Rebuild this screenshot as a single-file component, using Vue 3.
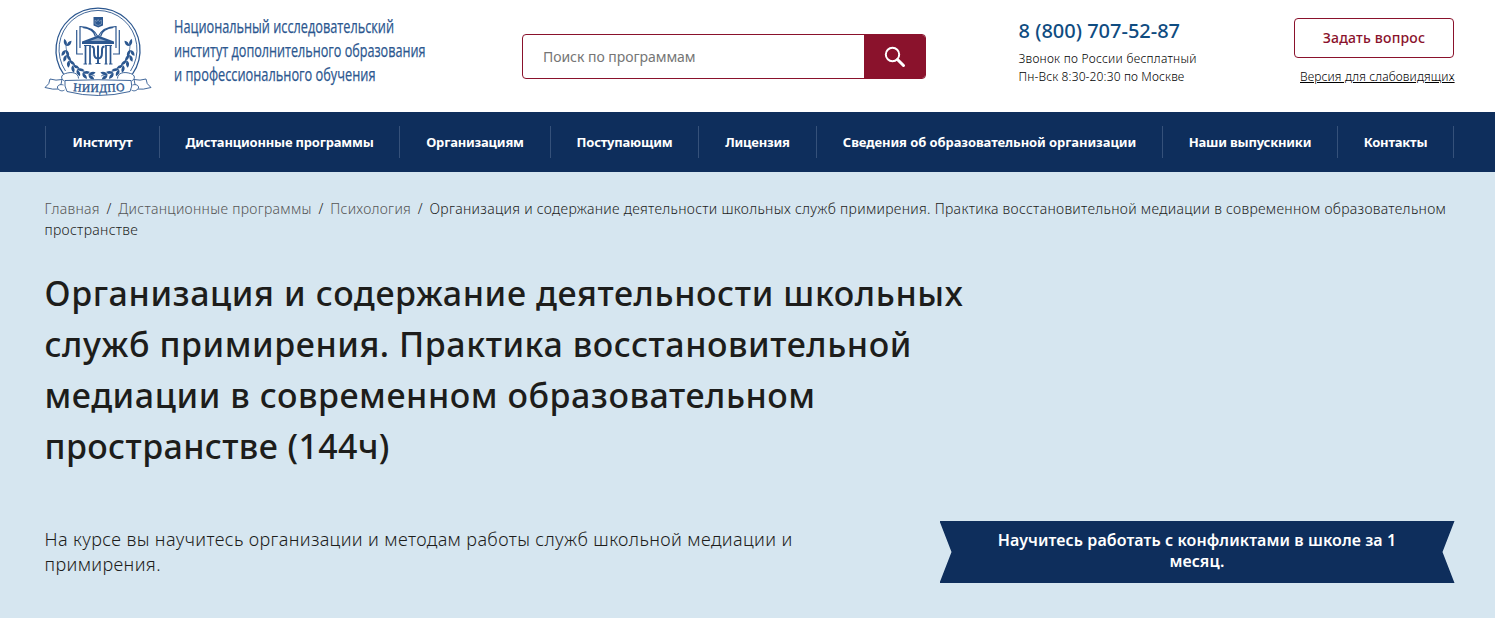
<script setup>
const menu = [
  { label: 'Институт', width: 114 },
  { label: 'Дистанционные программы', width: 240 },
  { label: 'Организациям', width: 151 },
  { label: 'Поступающим', width: 148 },
  { label: 'Лицензия', width: 118 },
  { label: 'Сведения об образовательной организации', width: 346, wide: true },
  { label: 'Наши выпускники', width: 175 },
  { label: 'Контакты', width: 117 },
]
const crumbs = ['Главная', 'Дистанционные программы', 'Психология']
const leaves = [
  [26.500, 46, -75], [26, 50, 100], [26.500, 55, 85], [29, 60.500, 68], [32.500, 65.500, 52], [37, 69.500, 38], [42.500, 73, 25], [48.500, 75, 10],
]
</script>

<template>
  <div class="page">
    <header class="header">
      <svg class="emblem" width="120" height="105" viewBox="0 0 120 105">
        <g fill="none" stroke="#2c578f">
          <path d="M23.500 74A42 42 0 1 1 92.500 74" stroke-width="1.300" />
          <path d="M25.500 71A39 39 0 1 1 90.500 71" stroke-width=".9" />
          <path d="M40 48V26.500c10 0 15 4 18 10.500 3-6.500 8-10.500 18-10.500V48M36.700 30v24H43M79.300 30v24H73M42.500 27.500c8 1 12 5 13 9M73.500 27.500c-8 1-12 5-13 9" stroke-width="1.200" />
          <path d="M51.500 46.500c3 0 2.500 3 2.500 6 0 4 1 6 4 6s4-2 4-6c0-3-.5-6 2.500-6M58 45.500v18" stroke-width="2" />
          <path d="M45.500 45v19M50 45v19M66 45v19M70.500 45v19" stroke-width="1.700" />
          <path d="M44 45.500h7M65 45.500h7M43.500 64h3.500M48.500 64h3M64.500 64h3M69 64h3.500M55.500 63.500h5" stroke-width="1.200" />
        </g>
        <path d="M42 41.500L58 35.500l16 6v2.500H42z" fill="#2c578f" />
        <path d="M50 41l8-3 8 3z" fill="#8ea8c8" />
        <path d="M53.500 17h9.500v8.500l-4.750 2-4.750-2z" fill="#2c578f" />
        <path d="M55 20l2 1.500 1.200-2 1.200 2 2-1.500v4l-3.200 1.500-3.200-1.500z" fill="none" stroke="#a9bdd5" stroke-width=".5" />
        <g v-for="side in [1, -1]" :key="side" :transform="side === 1 ? '' : 'translate(116 0) scale(-1 1)'">
          <path d="M26 42c-1 17 10 29 29 34" fill="none" stroke="#2c578f" stroke-width=".7" />
          <path v-for="leaf in leaves" :key="leaf[1]" :transform="`translate(${leaf[0]} ${leaf[1]}) rotate(${leaf[2]})`" d="M0 0q1-4.500 6.500-4-1.500 4-6.500 4zM0 0q1 4.500 6.500 3.500Q5-.5 0 0z" fill="#2c578f" />
          <g fill="#fff" stroke="#2c578f" stroke-width=".9" stroke-linejoin="round">
            <path d="M22 79.500q-6 1.500-12-.5 0 5-5 8.500 8 2.500 15 1.500z" />
            <path d="M24.500 90c-3 2-6 0-7-2-.5-3 3-4 6-3" />
            <path d="M24.500 81c-4-2-4-6 1-7.500 6-2 13-1 13 5" />
          </g>
        </g>
        <path d="M25 80.500Q58 79 91 80.500q2 5.500-1 11Q58 99.500 27 91.500q-3-5.500-2-11z" fill="#fff" stroke="#2c578f" stroke-width=".9" />
        <path id="ribbon-line" d="M33 91Q58 93.500 86 90.500" fill="none" />
        <text class="ribbon-text"><textPath href="#ribbon-line" textLength="52" lengthAdjust="spacing">НИИДПО</textPath></text>
      </svg>
      <svg class="slogan" width="262" height="90" viewBox="0 0 262 90">
        <text x="0" y="33" textLength="220" lengthAdjust="spacingAndGlyphs">Национальный исследовательский</text>
        <text x="0" y="57" textLength="251.500" lengthAdjust="spacingAndGlyphs">институт дополнительного образования</text>
        <text x="0" y="81" textLength="201.500" lengthAdjust="spacingAndGlyphs">и профессионального обучения</text>
      </svg>
      <div class="search">
        <span class="search-field">Поиск по программам</span>
        <span class="search-button">
          <svg width="22" height="22" viewBox="0 0 22 22" fill="none" stroke="#fff">
            <circle cx="8.500" cy="8.500" r="6.700" stroke-width="2" />
            <path d="M13.500 13.500l6 6" stroke-width="3" stroke-linecap="round" />
          </svg>
        </span>
      </div>
      <div class="phone">
        <div class="number">8 (800) 707-52-87</div>
        <div class="note">Звонок по России бесплатный</div>
        <div class="note hours">Пн-Вск 8:30-20:30 по Москве</div>
      </div>
      <div class="actions">
        <div class="ask">Задать вопрос</div>
        <div class="vision">Версия для слабовидящих</div>
      </div>
    </header>
    <nav class="nav">
      <span v-for="item in menu" :key="item.label" class="nav-item" :class="{ wide: item.wide }" :style="{ width: item.width + 'px' }">{{ item.label }}</span>
    </nav>
    <main class="hero">
      <div class="crumbs">
        <template v-for="c in crumbs" :key="c"><span class="crumb">{{ c }}</span><span class="slash">/</span></template><span class="current">Организация и содержание деятельности школьных служб примирения. Практика восстановительной медиации в современном образовательном<br>пространстве</span>
      </div>
      <h1><span class="first-line">Организация и содержание деятельности школьных</span><br>служб примирения. Практика восстановительной<br>медиации в современном образовательном<br><span class="last-line">пространстве (144ч)</span></h1>
      <div class="bottom">
        <p class="lead">На курсе вы научитесь организации и методам работы служб школьной медиации и<br>примирения.</p>
        <div class="banner">Научитесь работать с конфликтами в школе за 1<br>месяц.</div>
      </div>
    </main>
  </div>
</template>

<style>
body { margin: 0; overflow: hidden; }
</style>
<style scoped>
.page { width: 1495px; height: 618px; background: #d6e6f0; font-family: "Noto Sans", "Open Sans", sans-serif; color: #1d1d1b; overflow: hidden; white-space: nowrap; }
.header { height: 112px; background: #fff; display: flex; align-items: flex-start; }
.emblem { margin-left: 40px; flex: none; }
.ribbon-text { font: 11.5px "Liberation Serif", serif; fill: #2c578f; stroke: #2c578f; stroke-width: .35px; }
.slogan { margin-left: 14px; flex: none; overflow: visible; }
.slogan text { font: 400 17.5px "Open Sans", sans-serif; fill: #2c578f; stroke: #2c578f; stroke-width: .25px; }
.search { box-sizing: border-box; width: 404px; height: 45px; margin: 34px 0 0 86px; border: 1px solid #8a122c; border-radius: 4px; display: flex; overflow: hidden; flex: none; }
.search-field { width: 341px; padding-left: 20px; box-sizing: border-box; line-height: 43px; font-size: 14px; letter-spacing: -.05px; color: #757575; }
.search-button { flex: 1; background: #8a122c; display: flex; align-items: center; justify-content: center; }
.phone { width: 200px; margin: 16px 0 0 92.5px; flex: none; }
.number { font-size: 20px; font-weight: 500; line-height: 30px; color: #0f4c81; }
.note { font-size: 12px; line-height: 18px; font-weight: 300; margin-top: 4px; letter-spacing: .27px; color: #000; }
.hours { margin-top: 0; letter-spacing: .14px; }
.actions { width: 160px; margin: 18px 0 0 75.5px; flex: none; }
.ask { height: 38px; border: 1px solid #8a122c; border-radius: 4px; width: 158px; text-align: center; line-height: 38px; font-size: 14px; font-weight: 500; letter-spacing: .2px; color: #8a122c; }
.vision { margin: 10px 0 0 6px; font-size: 12px; line-height: 18px; font-weight: 300; letter-spacing: .13px; text-decoration: underline; color: #000; }
.nav { height: 60px; background: #0e2e5c; display: flex; align-items: center; padding-left: 45px; }
.nav-item { box-sizing: border-box; flex: none; height: 32px; line-height: 32px; border-left: 1px solid #35517a; text-align: center; color: #fff; font-size: 13px; font-weight: 700; letter-spacing: -.2px; }
.nav-item.wide { letter-spacing: -.08px; }
.nav-item:last-child { border-right: 1px solid #35517a; }
.hero { padding: 26px 40px 0 44.5px; }
.crumbs { font-size: 14px; line-height: 21px; font-weight: 300; letter-spacing: .305px; }
.crumb { color: #555; }
.slash { margin: 0 6.6px; }
h1 { margin: 28px 0 0; font-size: 34px; line-height: 51px; font-weight: 500; letter-spacing: .55px; }
.first-line { letter-spacing: .61px; }
.last-line { letter-spacing: .38px; }
.bottom { display: flex; align-items: flex-start; margin-top: 49px; }
.lead { margin: 6px 0 0; width: 895px; font-size: 18px; line-height: 25px; font-weight: 300; letter-spacing: .38px; }
.banner { width: 515px; height: 62px; box-sizing: border-box; padding-top: 9px; background: #0e2e5c; color: #fff; text-align: center; font-size: 16px; line-height: 21px; font-weight: 600; letter-spacing: .08px; clip-path: polygon(0 0, 100% 0, calc(100% - 12px) 50%, 100% 100%, 0 100%, 12px 50%); }
</style>
